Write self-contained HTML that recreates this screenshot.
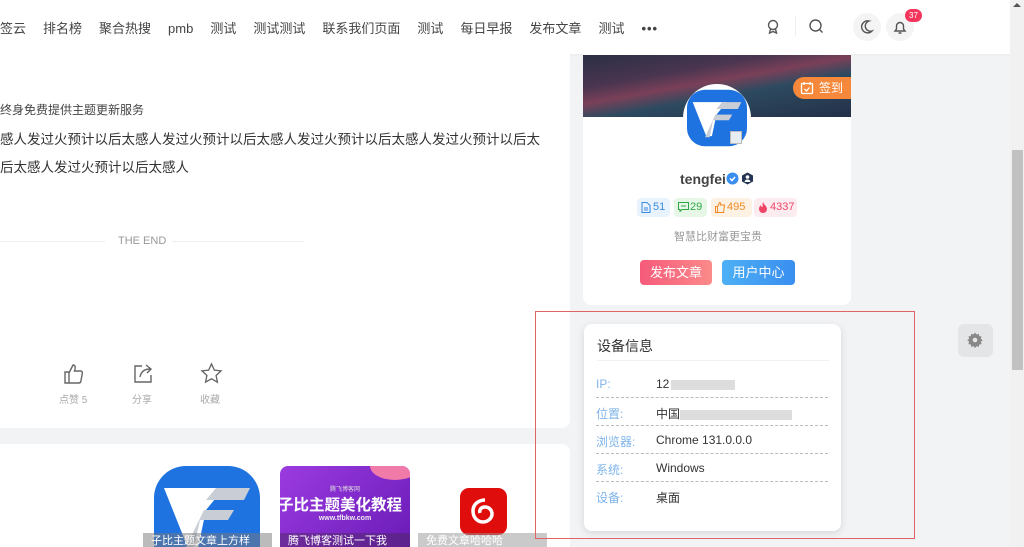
<!DOCTYPE html>
<html><head><meta charset="utf-8"><style>
*{margin:0;padding:0;box-sizing:border-box}
html{width:1024px;height:547px;overflow:hidden}
body{width:1024px;height:547px;overflow:hidden;background:#f2f3f5;font-family:"Liberation Sans","Noto Sans CJK SC",sans-serif;position:relative;color:#333}
.abs{position:absolute}
.hdr{left:0;top:0;width:1010px;height:54px;background:#fff;box-shadow:0 1px 3px rgba(0,0,0,.04)}
.nav{left:0;top:18px;font-size:13px;color:#444;white-space:nowrap}
.nav span{margin-right:17px}
.card{background:#fff;border-radius:8px}
.lbl{color:#7fb4ea}
.row{position:absolute;left:12px;width:232px;border-bottom:1px dashed #bbb;height:28px;font-size:12px}
.row b{font-weight:normal;position:absolute;left:0;top:7px}
.row i{font-style:normal;position:absolute;left:60px;top:7px;color:#333}
.blur{display:inline-block;height:10px;background:#ddd;vertical-align:middle}
.stat{position:absolute;top:198px;height:19px;border-radius:4px;font-size:11px;line-height:19px;padding-left:16px}
.stat svg{position:absolute;left:4px;top:4px}
.tl{position:absolute;top:533px;height:14px;font-size:11px;color:#fff;padding-left:8px;line-height:16px;overflow:hidden;white-space:nowrap}
</style></head><body>
<div class="abs hdr"></div>
<div class="abs nav"><span>签云</span><span>排名榜</span><span>聚合热搜</span><span>pmb</span><span>测试</span><span>测试测试</span><span>联系我们页面</span><span>测试</span><span>每日早报</span><span>发布文章</span><span>测试</span><span style="font-weight:bold;letter-spacing:1px">•••</span></div>
<svg class="abs" style="left:765px;top:18px" width="16" height="17" viewBox="0 0 16 17" fill="none" stroke="#555" stroke-width="1.4"><circle cx="8" cy="7" r="4.5"/><path d="M5.5 11l-1 4 3.5-1.5 3.5 1.5-1-4"/></svg>
<div class="abs" style="left:795px;top:16px;width:1px;height:20px;background:#eee"></div>
<svg class="abs" style="left:808px;top:18px" width="16" height="16" viewBox="0 0 16 16" fill="none" stroke="#555" stroke-width="1.4"><circle cx="7.5" cy="7.5" r="5.5"/><path d="M11.5 11.5l3 3"/></svg>
<div class="abs" style="left:853px;top:13px;width:28px;height:28px;border-radius:50%;background:#f4f4f4"></div>
<svg class="abs" style="left:860px;top:19px" width="14" height="16" viewBox="0 0 14 16" fill="none" stroke="#555" stroke-width="1.4"><path d="M9 2a6 6 0 1 0 3 10A5 5 0 0 1 9 2z"/></svg>
<div class="abs" style="left:886px;top:13px;width:28px;height:28px;border-radius:50%;background:#f4f4f4"></div>
<svg class="abs" style="left:893px;top:19px" width="14" height="16" viewBox="0 0 14 16" fill="none" stroke="#555" stroke-width="1.4"><path d="M2 12h10l-1.5-2V7a3.5 3.5 0 0 0-7 0v3zM5.5 14h3"/></svg>
<div class="abs" style="left:905px;top:9px;width:17px;height:13px;border-radius:7px;background:#f5365c;color:#fff;font-size:8px;text-align:center;line-height:13px">37</div>
<div class="abs" style="left:1010px;top:0;width:14px;height:547px;background:#f1f1f1"></div>
<div class="abs" style="left:1012px;top:150px;width:11px;height:220px;background:#c1c1c1"></div>
<div class="abs" style="left:1013px;top:3px;width:0;height:0;border-left:4px solid transparent;border-right:4px solid transparent;border-bottom:4px solid #555"></div>
<div class="abs card" style="left:0;top:54px;width:570px;height:374px;border-radius:0 0 8px 0"></div>
<div class="abs" style="left:0;top:101px;font-size:12px;color:#444">终身免费提供主题更新服务</div>
<div class="abs" style="left:0;top:126px;font-size:13.5px;color:#333;white-space:nowrap;line-height:28px">感人发过火预计以后太感人发过火预计以后太感人发过火预计以后太感人发过火预计以后太<br>后太感人发过火预计以后太感人</div>
<div class="abs" style="left:0;top:241px;width:105px;height:1px;background:#eee"></div>
<div class="abs" style="left:172px;top:241px;width:132px;height:1px;background:#eee"></div>
<div class="abs" style="left:118px;top:235px;font-size:11px;color:#999">THE END</div>
<svg class="abs" style="left:63px;top:363px" width="22" height="22" viewBox="0 0 22 22" fill="none" stroke="#666" stroke-width="1.4"><path d="M2 9h4v11H2zM6 10l4-8c2 0 2.5 1.5 2 4l-.5 2h6c1.5 0 2 1 1.8 2.5l-1.5 8c-.3 1-1 1.5-2 1.5H6"/></svg>
<svg class="abs" style="left:132px;top:363px" width="22" height="22" viewBox="0 0 22 22" fill="none" stroke="#666" stroke-width="1.4"><path d="M10 3H3v16h16v-7M8 14c1-5 4-8 10-8M14 2l5 4-4 4"/></svg>
<svg class="abs" style="left:200px;top:362px" width="23" height="22" viewBox="0 0 24 23" fill="none" stroke="#666" stroke-width="1.4"><path d="M12 2l3 6.5 7 .8-5.2 4.8 1.4 7L12 17.5 5.8 21l1.4-7L2 9.3l7-.8z"/></svg>
<div class="abs" style="left:59px;top:391px;font-size:10px;color:#aaa">点赞 5</div>
<div class="abs" style="left:132px;top:391px;font-size:10px;color:#aaa">分享</div>
<div class="abs" style="left:200px;top:391px;font-size:10px;color:#aaa">收藏</div>
<div class="abs card" style="left:0;top:444px;width:570px;height:103px;border-radius:0 8px 0 0"></div>
<svg class="abs" style="left:154px;top:466px" width="106" height="81" viewBox="0 0 106 81"><path d="M32 0h42a32 32 0 0 1 32 32v49H0V32A32 32 0 0 1 32 0z" fill="#1e73e0"/><path d="M10 22h60l-18 22-8 38-10 0z" fill="#fff"/><path d="M62 22h34l-6 12H52zM50 44h30l-6 10H46l-6 27h-8z" fill="#c9ced6"/></svg>
<div class="abs" style="left:280px;top:466px;width:130px;height:81px;border-radius:8px 8px 0 0;background:linear-gradient(135deg,#9b3be0,#6a1bb8);overflow:hidden">
<div class="abs" style="right:-10px;top:-14px;width:50px;height:28px;border-radius:50%;background:#f07aa8"></div>
<div class="abs" style="left:0;top:18px;width:130px;text-align:center;font-size:6px;color:#ddd">腾飞博客网</div>
<div class="abs" style="left:-2px;top:27px;font-size:15.5px;color:#fff;font-weight:bold;white-space:nowrap">子比主题美化教程</div>
<div class="abs" style="left:0;top:49px;width:130px;text-align:center;font-size:7px;color:#eee;font-weight:bold">www.tfbkw.com</div></div>
<div class="abs" style="left:460px;top:488px;width:47px;height:47px;border-radius:9px;background:#e00d0d"></div>
<svg class="abs" style="left:466px;top:494px" width="35" height="35" viewBox="0 0 35 35" fill="none" stroke="#fff" stroke-width="3.5"><path d="M19 6c-6 0-12 4-12 11s5 11 10 11 9-4 9-8-3-7-7-7-6 3-5 6"/></svg>
<div class="tl" style="left:143px;width:129px;background:rgba(120,120,120,.5)">子比主题文章上方样</div>
<div class="tl" style="left:280px;width:130px;background:rgba(80,40,100,.5)">腾飞博客测试一下我</div>
<div class="tl" style="left:418px;width:129px;background:rgba(150,150,150,.5)">免费文章哈哈哈</div>
<div class="abs card" style="left:583px;top:40px;width:268px;height:265px"></div>
<div class="abs" style="left:583px;top:55px;width:268px;height:62px;background:linear-gradient(170deg,#2a2f45 0%,#4a3550 30%,#7a4058 45%,#2d4a60 60%,#233048 100%)"></div>
<div class="abs" style="left:793px;top:77px;width:58px;height:22px;border-radius:11px 0 0 11px;background:#f5883a;color:#fff;font-size:12px;line-height:22px;padding-left:26px">签到</div>
<svg class="abs" style="left:800px;top:81px" width="14" height="14" viewBox="0 0 14 14" fill="none" stroke="#fff" stroke-width="1.3"><rect x="1.5" y="2.5" width="11" height="10" rx="1"/><path d="M4 1v3M10 1v3M4.5 8l2 2 3-3.5"/></svg>
<div class="abs" style="left:683px;top:84px;width:68px;height:68px;border-radius:50%;background:#fff"></div>
<svg class="abs" style="left:687px;top:89px" width="60" height="58" viewBox="0 0 106 100"><rect width="106" height="100" rx="32" fill="#1e73e0"/><path d="M10 22h60l-18 22-8 38-10 0z" fill="#fff"/><path d="M62 22h34l-6 12H52zM50 44h30l-6 10H46l-6 30h-8z" fill="#c9ced6"/></svg>
<div class="abs" style="left:730px;top:131px;width:12px;height:13px;background:#e6eef4;border:1px solid #bbb"></div>
<div class="abs" style="left:680px;top:171px;font-size:14px;font-weight:bold;color:#444">tengfei</div>
<svg class="abs" style="left:726px;top:172px" width="13" height="13" viewBox="0 0 13 13"><circle cx="6.5" cy="6.5" r="6" fill="#3a8ef0"/><path d="M4 6.5l2 2 3-3.5" stroke="#fff" stroke-width="1.5" fill="none"/></svg>
<svg class="abs" style="left:741px;top:172px" width="13" height="13" viewBox="0 0 13 13"><path d="M6.5 0.5l5.5 3v6l-5.5 3-5.5-3v-6z" fill="#233454"/><circle cx="6.5" cy="5" r="1.8" fill="#fff"/><path d="M3.5 10c.5-2 1.5-2.5 3-2.5s2.5.5 3 2.5" fill="#fff"/></svg>
<div class="stat" style="left:637px;width:33px;background:#e8f3fd;color:#3a8ae0"><svg width="10" height="11" viewBox="0 0 10 11" fill="none" stroke="#3a8ae0" stroke-width="1"><path d="M1 .5h5l3 3v7H1zM3 6h4M3 8h4"/></svg>51</div>
<div class="stat" style="left:674px;width:33px;background:#e6f7e8;color:#2fa846"><svg width="11" height="10" viewBox="0 0 11 10" fill="none" stroke="#2fa846" stroke-width="1"><path d="M.5.5h10v7H4l-2 2v-2H.5zM3 4h5"/></svg>29</div>
<div class="stat" style="left:711px;width:41px;background:#fdf1e3;color:#f08a24"><svg width="11" height="11" viewBox="0 0 11 11" fill="none" stroke="#f08a24" stroke-width="1"><path d="M.5 4.5h2v6h-2zM2.5 5l2-4.5c1 0 1.5.8 1 2.5h4l-1 7.5H2.5"/></svg>495</div>
<div class="stat" style="left:754px;width:43px;background:#fdecef;color:#ee4466"><svg width="10" height="11" viewBox="0 0 10 11"><path d="M5 0c1 3 4 4 4 7a4 4 0 0 1-8 0c0-2 1-3 2-4 0 2 1 2 1.5 2C5 4 4 2 5 0z" fill="#ee4466"/></svg>4337</div>
<div class="abs" style="left:674px;top:228px;font-size:11px;color:#999">智慧比财富更宝贵</div>
<div class="abs" style="left:640px;top:260px;width:72px;height:25px;border-radius:4px;background:linear-gradient(90deg,#f65a7a,#fb8a8a);color:#fff;font-size:13px;line-height:25px;text-align:center">发布文章</div>
<div class="abs" style="left:722px;top:260px;width:73px;height:25px;border-radius:4px;background:linear-gradient(90deg,#4db0f5,#3a8ef0);color:#fff;font-size:13px;line-height:25px;text-align:center">用户中心</div>
<div class="abs" style="left:535px;top:311px;width:380px;height:228px;border:1.5px solid #e06464"></div>
<div class="abs card" style="left:584px;top:324px;width:257px;height:207px;box-shadow:0 2px 8px rgba(0,0,0,.12)">
<div class="abs" style="left:13px;top:12px;font-size:14px;color:#333">设备信息</div>
<div class="abs" style="left:13px;top:36px;width:232px;height:1px;background:#f0f0f0"></div>
<div class="row" style="top:46px"><b class="lbl">IP:</b><i>12<span class="blur" style="width:64px;margin-left:2px"></span></i></div>
<div class="row" style="top:74px"><b class="lbl">位置:</b><i>中国<span class="blur" style="width:112px"></span></i></div>
<div class="row" style="top:102px"><b class="lbl">浏览器:</b><i>Chrome 131.0.0.0</i></div>
<div class="row" style="top:130px"><b class="lbl">系统:</b><i>Windows</i></div>
<div class="row" style="top:158px;border:none"><b class="lbl">设备:</b><i>桌面</i></div>
</div>
<div class="abs" style="left:958px;top:324px;width:35px;height:33px;border-radius:6px;background:#e4e5e7"></div>
<svg class="abs" style="left:967px;top:332px" width="16" height="16" viewBox="0 0 16 16"><path d="M8 0.5l1.5 2 2.3-.8.4 2.4 2.4.4-.8 2.3 2 1.5-2 1.5.8 2.3-2.4.4-.4 2.4-2.3-.8-1.5 2-1.5-2-2.3.8-.4-2.4-2.4-.4.8-2.3-2-1.5 2-1.5-.8-2.3 2.4-.4.4-2.4 2.3.8z" fill="#888"/><circle cx="8" cy="8" r="2.3" fill="#e4e5e7"/></svg>
</body></html>
